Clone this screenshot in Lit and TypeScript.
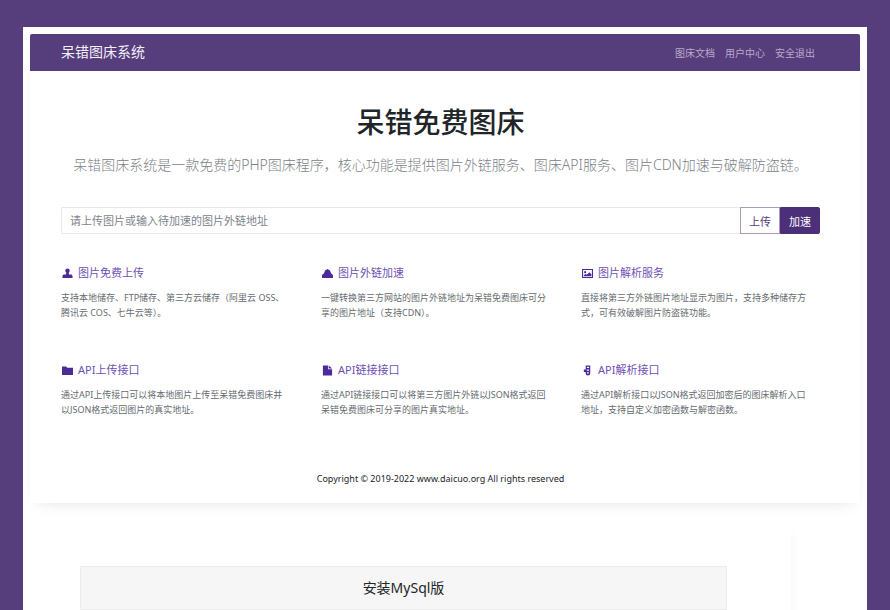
import { LitElement, html, css, svg } from "lit";
import { customElement } from "lit/decorators.js";

interface Feature {
  icon: unknown;
  title: string;
  lines: string[];
}

const features: Feature[] = [
  {
    icon: svg`<circle cx="6" cy="3" r="2.4"/><path d="M4.7 4.5h2.6l.4 2.5h2.8l1 1.6V11H.5V8.600l1-1.600h2.800z"/>`,
    title: "图片免费上传",
    lines: ["支持本地储存、FTP储存、第三方云储存（阿里云 OSS、", "腾讯云 COS、七牛云等）。"],
  },
  {
    icon: svg`<path d="M0 11V7.500l2-1.500 1.400-3.400L6 1.200l2.600 1.400L10 6l2 1.500V11z"/>`,
    title: "图片外链加速",
    lines: ["一键转换第三方网站的图片外链地址为呆错免费图床可分", "享的图片地址（支持CDN）。"],
  },
  {
    icon: svg`<path fill-rule="evenodd" d="M0 1h12v10H0zM1.200 2.200v7.600h9.600V2.200z"/><circle cx="3.400" cy="4.500" r="1.200"/><path d="M2 9V8l2-1.600 1.200 1L8 4.500l2.200 2.300V9z"/>`,
    title: "图片解析服务",
    lines: ["直接将第三方外链图片地址显示为图片，支持多种储存方", "式，可有效破解图片防盗链功能。"],
  },
  {
    icon: svg`<path d="M0 1.500h4.500l1.300 1.400H12v8H0z"/>`,
    title: "API上传接口",
    lines: ["通过API上传接口可以将本地图片上传至呆错免费图床并", "以JSON格式返回图片的真实地址。"],
  },
  {
    icon: svg`<path d="M1 .5h5.500v4H11v7H1z"/><path d="M7.300.5L11 3.800H7.300z"/>`,
    title: "API链接接口",
    lines: ["通过API链接接口可以将第三方图片外链以JSON格式返回", "呆错免费图床可分享的图片真实地址。"],
  },
  {
    icon: svg`<path fill-rule="evenodd" d="M4 .5h5v8.500a2.500 2.500 0 0 1-5 0V7.500H2V5h2zM5.300 2v1.300h2.400V2zM5.300 5v1.200h2.400V5zM5.500 8v1.300h2V8z"/>`,
    title: "API解析接口",
    lines: ["通过API解析接口以JSON格式返回加密后的图床解析入口", "地址，支持自定义加密函数与解密函数。"],
  },
];

@customElement("app-root")
export class AppRoot extends LitElement {
  static styles = css`
    :host {
      display: block;
      box-sizing: border-box;
      height: 100vh;
      overflow: hidden;
      padding: 27px 23px 0;
      background: #563d7c;
      color: #212529;
      font-family: "Noto Sans", "Noto Sans CJK SC", sans-serif;
    }
    * { box-sizing: border-box; }
    h1, h2, p { margin: 0; font-weight: 400; }
    a { color: inherit; text-decoration: none; }
    .sheet {
      min-height: 100%;
      padding: 7px 7px 0;
      background: #fff;
      overflow: hidden;
    }
    .page {
      padding-bottom: 16px;
      border-radius: 2px;
      box-shadow: 0 8px 16px -8px #00000018, 0 0 8px #00000006;
    }
    .bar {
      display: flex;
      align-items: center;
      justify-content: space-between;
      height: 37px;
      padding: 0 45px 0 31px;
      border-radius: 2px 2px 0 0;
      background: #563d7c;
      color: #f4effa;
    }
    .brand { font-size: 14px; line-height: 18px; padding-bottom: 2px; }
    .links {
      display: flex;
      gap: 10px;
      color: #b9aacb;
      font-size: 10px;
    }
    .content { padding: 33px 40px 0 31px; }
    .title {
      font-size: 28px;
      line-height: 36px;
      font-weight: 500;
      text-align: center;
    }
    .lead {
      margin-top: 15px;
      color: #7b8187;
      font-size: 14px;
      line-height: 20px;
      font-weight: 300;
      text-align: center;
      white-space: nowrap;
    }
    .group {
      display: flex;
      height: 27px;
      margin-top: 32px;
    }
    .url {
      flex: 1;
      min-width: 0;
      padding: 0 8px;
      border: 1px solid #e6e8ea;
      border-right: 0;
      border-radius: 2px 0 0 2px;
      outline: 0;
      font: 11px "Noto Sans", "Noto Sans CJK SC", sans-serif;
    }
    .url::placeholder { color: #7d848b; opacity: 1; }
    .btn {
      width: 40px;
      padding: 0;
      border: 1px solid #a99cbd;
      background: #fff;
      color: #563d7c;
      font: 11px "Noto Sans", "Noto Sans CJK SC", sans-serif;
    }
    .primary {
      border-color: #4b2f78;
      border-radius: 0 2px 2px 0;
      background: #4b2f78;
      color: #fff;
    }
    .features {
      display: grid;
      grid-template-columns: repeat(3, 1fr);
      gap: 42px 21px;
      margin-top: 31px;
    }
    .name {
      display: flex;
      align-items: center;
      gap: 5px;
      padding-left: 1px;
      color: #6f4fb3;
      font-size: 11px;
      line-height: 16px;
    }
    .icon {
      width: 11px;
      height: 11px;
      fill: #4d2a99;
    }
    .text {
      margin-top: 9px;
      color: #666b70;
      font-size: 9px;
      line-height: 15px;
      white-space: nowrap;
    }
    .copy {
      margin-top: 54px;
      font-size: 9px;
      line-height: 16px;
      text-align: center;
    }
    .next {
      margin: 26px 69px 0 0;
      padding: 37px 64px 0 50px;
      box-shadow: 3px 6px 8px #00000008;
    }
    .panel {
      border: 1px solid #ececec;
      background: #f6f6f6;
      font-size: 14px;
      line-height: 42px;
      text-align: center;
    }
    .body { height: 60px; border: 1px solid #ececec; border-top: 0; }
  `;

  render() {
    return html`
      <div class="sheet">
        <main class="page">
          <header class="bar">
            <a class="brand" href="#">呆错图床系统</a>
            <nav class="links">
              <a href="#">图床文档</a>
              <a href="#">用户中心</a>
              <a href="#">安全退出</a>
            </nav>
          </header>
          <div class="content">
            <h1 class="title">呆错免费图床</h1>
            <p class="lead">呆错图床系统是一款免费的PHP图床程序，核心功能是提供图片外链服务、图床API服务、图片CDN加速与破解防盗链。</p>
            <form class="group" @submit=${(e: Event) => e.preventDefault()}>
              <input class="url" type="text" aria-label="图片外链地址" placeholder="请上传图片或输入待加速的图片外链地址" />
              <button class="btn" type="button">上传</button>
              <button class="btn primary" type="submit">加速</button>
            </form>
            <section class="features">
              ${features.map(
                (f) => html`<article>
                  <h2 class="name">
                    <svg class="icon" viewBox="0 0 12 12" aria-hidden="true">${f.icon}</svg>
                    <a href="#">${f.title}</a>
                  </h2>
                  <p class="text">${f.lines[0]}<br />${f.lines[1]}</p>
                </article>`
              )}
            </section>
            <p class="copy">Copyright © 2019-2022 www.daicuo.org All rights reserved</p>
          </div>
        </main>
        <section class="next">
          <h2 class="panel">安装MySql版</h2>
          <div class="body"></div>
        </section>
      </div>
    `;
  }
}
